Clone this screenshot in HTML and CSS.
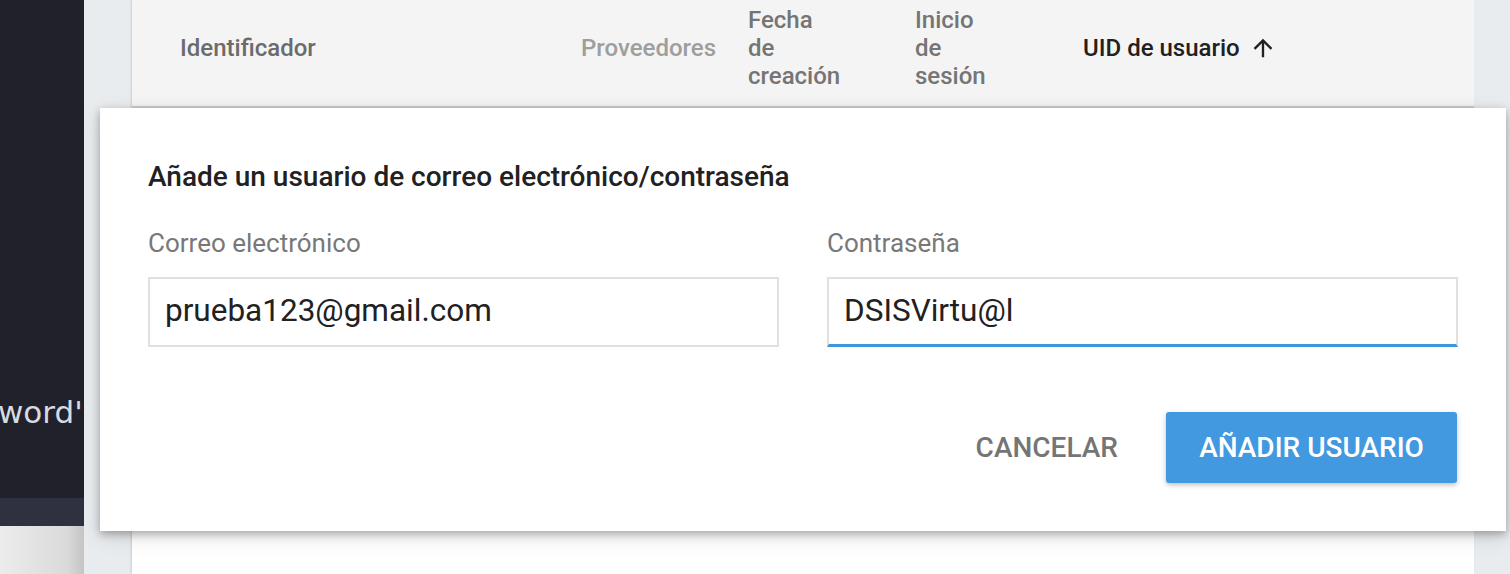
FILE: index.html
```html
<!DOCTYPE html>
<html lang="es">
<head>
<meta charset="utf-8">
<title>Añadir usuario</title>
<link rel="stylesheet" href="styles.css">
</head>
<body>
<div class="page">
  <aside class="side">
    <div class="side-dark">
      <div class="side-code">word'</div>
    </div>
    <div class="side-bar"></div>
    <div class="side-light"></div>
  </aside>
  <main class="main">
    <section class="card">
      <div class="thead">
        <div class="th th-id">Identificador</div>
        <div class="th th-prov">Proveedores</div>
        <div class="th th-narrow">Fecha<br>de<br>creación</div>
        <div class="th th-narrow">Inicio<br>de<br>sesión</div>
        <div class="th th-uid">UID de usuario
          <svg class="arrow" width="28" height="28" viewBox="0 0 24 24"><path d="M4 12l1.41 1.41L11 7.83V20h2V7.83l5.58 5.59L20 12l-8-8-8 8z" fill="#212121"/></svg>
        </div>
      </div>
      <div class="tbody"></div>
    </section>
  </main>
</div>

<div class="dialog">
  <h2 class="dialog-title">Añade un usuario de correo electrónico/contraseña</h2>
  <div class="fields">
    <div class="field">
      <label class="label">Correo electrónico</label>
      <div class="input">prueba123@gmail.com</div>
    </div>
    <div class="field">
      <label class="label">Contraseña</label>
      <div class="input input-focus">DSISVirtu@l</div>
    </div>
  </div>
  <div class="actions">
    <button class="btn btn-flat">CANCELAR</button>
    <button class="btn btn-raised">AÑADIR USUARIO</button>
  </div>
</div>
</body>
</html>
```
FILE: styles.css
```css
html, body {
  margin: 0;
  padding: 0;
  height: 100%;
}
body {
  font-family: Roboto, "Liberation Sans", sans-serif;
  background: #e8ecef;
  overflow: hidden;
}
.page {
  display: flex;
  height: 574px;
}
.side {
  width: 84px;
  flex: none;
  display: flex;
  flex-direction: column;
}
.side-dark {
  height: 498px;
  background: #21212b;
  overflow: hidden;
}
.side-code {
  margin-top: 390px;
  margin-left: -2px;
  font-family: "DejaVu Sans", sans-serif;
  font-size: 31px;
  line-height: 44px;
  color: #d6dbe2;
  white-space: nowrap;
}
.side-bar {
  height: 28px;
  background: #2f3140;
}
.side-light {
  flex: 1;
  background: linear-gradient(to right, #ececec, #dadada 80%, #c4c4c4);
}
.main {
  flex: 1;
  padding: 0 36px 0 48px;
  display: flex;
}
.card {
  flex: 1;
  background: #ffffff;
  box-shadow: -1px 0 2px rgba(0,0,0,0.12);
  display: flex;
  flex-direction: column;
}
.thead {
  height: 108px;
  box-sizing: border-box;
  padding-bottom: 10px;
  background: #f4f4f4;
  border-bottom: 2px solid #cdcdcd;
  display: grid;
  grid-template-columns: 449px 167px 167px 168px 1fr;
  align-items: center;
  font-size: 24px;
  font-weight: 500;
  line-height: 28px;
  color: #757575;
}
.th-id { padding-left: 48px; color: #6b6b6b; }
.th-prov { color: #9e9e9e; }
.th-narrow { color: #757575; }
.th-uid {
  color: #212121;
  display: flex;
  align-items: center;
  gap: 9px;
}
.arrow { display: block; }
.tbody { flex: 1; }

.dialog {
  position: absolute;
  left: 100px;
  top: 108px;
  width: 1406px;
  height: 423px;
  box-sizing: border-box;
  background: #ffffff;
  box-shadow: 0 3px 8px rgba(0,0,0,0.28), 0 6px 20px rgba(0,0,0,0.12);
  padding: 53px 48px 0 48px;
}
.dialog-title {
  margin: 0;
  font-size: 28px;
  font-weight: 500;
  line-height: 32px;
  color: #212121;
}
.fields {
  margin-top: 35px;
  display: grid;
  grid-template-columns: 631px 631px;
  column-gap: 48px;
}
.field {
  display: flex;
  flex-direction: column;
}
.label {
  font-size: 26px;
  line-height: 30px;
  color: #787878;
  margin-bottom: 19px;
}
.input {
  height: 70px;
  box-sizing: border-box;
  border: 2px solid #e0e0e0;
  padding: 0 15px;
  font-size: 31.5px;
  line-height: 64px;
  color: #212121;
}
.input-focus {
  border-bottom: 3px solid #3e97dc;
}
.actions {
  margin-top: 65px;
  display: flex;
  justify-content: flex-end;
  align-items: center;
  gap: 48px;
  padding-right: 1px;
}
.btn {
  font-family: Roboto, "Liberation Sans", sans-serif;
  font-size: 28px;
  font-weight: 500;
  border: none;
  cursor: pointer;
}
.btn-flat {
  background: transparent;
  color: #757575;
  padding: 0;
}
.btn-raised {
  width: 291px;
  height: 71px;
  background: #4299e0;
  color: #ffffff;
  border-radius: 3px;
  box-shadow: 0 2px 5px rgba(0,0,0,0.25);
}
```
